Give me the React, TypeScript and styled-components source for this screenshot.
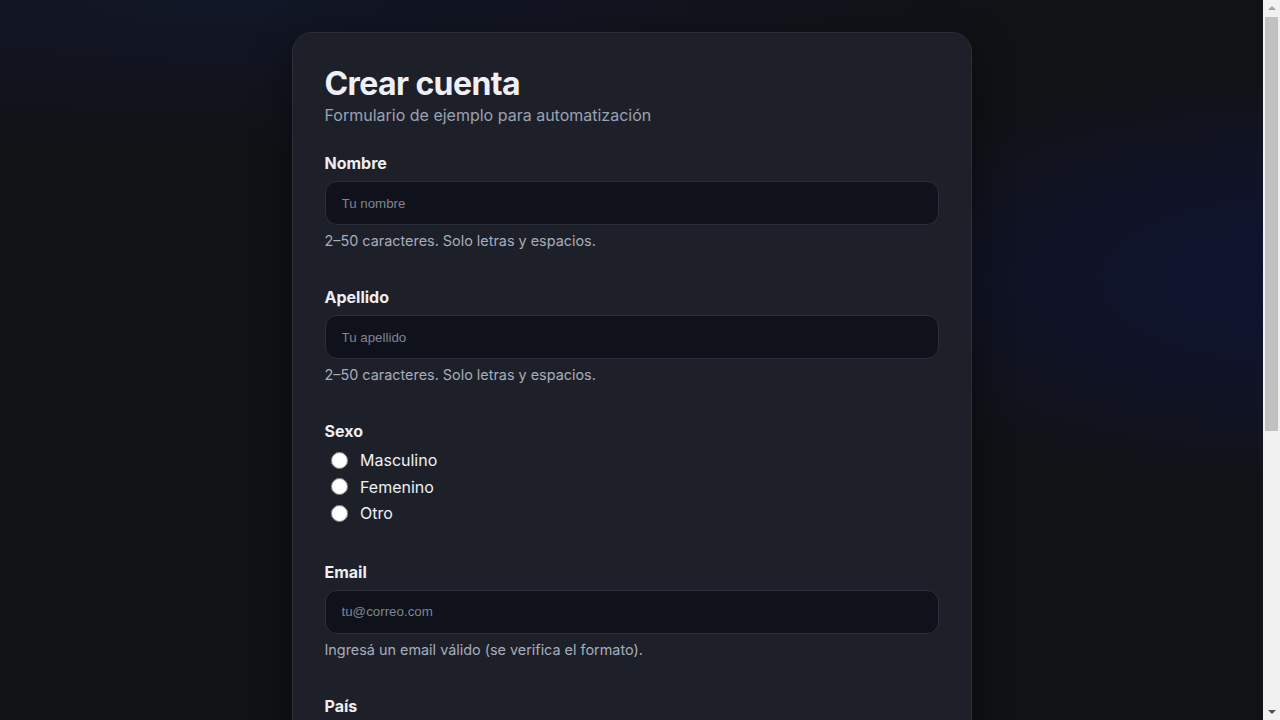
import React from "react";
import styled, { createGlobalStyle } from "styled-components";

const GlobalStyle = createGlobalStyle`
  html, body {
    margin: 0;
    padding: 0;
    height: 100%;
    overflow: hidden;
  }
  body {
    font-family: Inter, "Liberation Sans", Arial, sans-serif;
    color: #e8ebf1;
    background: #111216;
  }
`;

const Shell = styled.div`
  display: flex;
  height: 100vh;
`;

const ScrollArea = styled.div`
  flex: 1;
  min-width: 0;
  overflow-y: auto;
  background:
    radial-gradient(500px 210px at 1300px 280px, rgba(14, 22, 70, 0.55) 0%, rgba(14, 22, 70, 0.35) 50%, rgba(14, 22, 70, 0) 100%),
    radial-gradient(800px 150px at 18% 0px, rgba(18, 28, 60, 0.45), rgba(18, 28, 60, 0) 100%),
    #111216;
  background-attachment: local, local, local;
`;

const ScrollTrack = styled.div`
  width: 17px;
  flex: none;
  display: flex;
  flex-direction: column;
  background: #f1f1f1;
`;

const ScrollButton = styled.div<{ $down?: boolean }>`
  height: 17px;
  flex: none;
  display: flex;
  align-items: center;
  justify-content: center;
  &::before {
    content: "";
    width: 0;
    height: 0;
    border-left: 4px solid transparent;
    border-right: 4px solid transparent;
    ${(p) =>
      p.$down
        ? "border-top: 4px solid #505050; margin-top: 1px;"
        : "border-bottom: 4px solid #a3a3a3; margin-top: -1px;"}
  }
`;

const ScrollThumb = styled.div`
  height: 414px;
  margin: 0 2px;
  background: #c1c1c1;
  flex: none;
`;

const ScrollSpacer = styled.div`
  flex: 1;
`;

const Page = styled.main`
  display: flex;
  justify-content: center;
  padding: 32px 16px;
`;

const Card = styled.form`
  width: 100%;
  max-width: 680px;
  box-sizing: border-box;
  padding: 32px 32px 36px;
  background: #1e2029;
  border: 1px solid #2b2e39;
  border-radius: 20px;
  box-shadow: 0 12px 40px rgba(0, 0, 0, 0.45);
  display: flex;
  flex-direction: column;
`;

const Title = styled.h1`
  margin: 0;
  font-size: 32px;
  line-height: 38px;
  font-weight: 700;
  color: #eef0f5;
  letter-spacing: -0.6px;
`;

const Subtitle = styled.p`
  margin: 2px 0 28px;
  font-size: 16px;
  line-height: 20px;
  color: #9aa3b3;
`;

const Field = styled.div<{ $gap?: number }>`
  display: flex;
  flex-direction: column;
  margin-bottom: ${(p) => (p.$gap ?? 37)}px;
`;

const Label = styled.label`
  font-size: 16px;
  line-height: 20px;
  font-weight: 700;
  color: #eceef3;
  margin-bottom: 8px;
`;

const Input = styled.input`
  box-sizing: border-box;
  width: 100%;
  height: 44px;
  padding: 0 16px;
  background: #0f121a;
  border: 1px solid #2b2f3b;
  border-radius: 12px;
  color: #e8ebf1;
  font-family: "Liberation Sans", Arial, sans-serif;
  font-size: 13.333px;
  outline: none;
  &::placeholder {
    color: #7e8494;
  }
`;

const Select = styled.select`
  box-sizing: border-box;
  width: 100%;
  height: 44px;
  padding: 0 12px;
  background: #0f121a;
  border: 1px solid #2b2f3b;
  border-radius: 12px;
  color: #e8ebf1;
  font-family: "Liberation Sans", Arial, sans-serif;
  font-size: 13.333px;
`;

const Hint = styled.small`
  display: block;
  margin-top: 7px;
  font-size: 14.4px;
  line-height: 18px;
  color: #a6adbb;
`;

const RadioGroup = styled.div`
  display: flex;
  flex-direction: column;
  margin-top: -2px;
`;

const RadioRow = styled.label`
  display: flex;
  align-items: center;
  gap: 12px;
  height: 26.5px;
  font-size: 16px;
  color: #eef0f5;
`;

const Radio = styled.input`
  width: 17px;
  height: 17px;
  margin: 0 0 0 6.5px;
`;

const CheckRow = styled.label`
  display: flex;
  align-items: center;
  gap: 10px;
  font-size: 15px;
  color: #c9ced8;
  margin-bottom: 28px;
`;

const SubmitButton = styled.button`
  height: 46px;
  border: 0;
  border-radius: 12px;
  background: #3b6cf6;
  color: #ffffff;
  font-family: Inter, sans-serif;
  font-size: 16px;
  font-weight: 700;
`;

export default function App() {
  return (
    <>
      <GlobalStyle />
      <Shell>
        <ScrollArea>
          <Page>
            <Card noValidate onSubmit={(e) => e.preventDefault()}>
              <Title>Crear cuenta</Title>
              <Subtitle>Formulario de ejemplo para automatización</Subtitle>

              <Field>
                <Label htmlFor="nombre">Nombre</Label>
                <Input id="nombre" placeholder="Tu nombre" />
                <Hint>2–50 caracteres. Solo letras y espacios.</Hint>
              </Field>

              <Field>
                <Label htmlFor="apellido">Apellido</Label>
                <Input id="apellido" placeholder="Tu apellido" />
                <Hint>2–50 caracteres. Solo letras y espacios.</Hint>
              </Field>

              <Field $gap={35}>
                <Label as="span">Sexo</Label>
                <RadioGroup>
                  <RadioRow>
                    <Radio type="radio" name="sexo" value="M" />
                    Masculino
                  </RadioRow>
                  <RadioRow>
                    <Radio type="radio" name="sexo" value="F" />
                    Femenino
                  </RadioRow>
                  <RadioRow>
                    <Radio type="radio" name="sexo" value="O" />
                    Otro
                  </RadioRow>
                </RadioGroup>
              </Field>

              <Field>
                <Label htmlFor="email">Email</Label>
                <Input id="email" type="email" placeholder="tu@correo.com" />
                <Hint>Ingresá un email válido (se verifica el formato).</Hint>
              </Field>

              <Field>
                <Label htmlFor="pais">País</Label>
                <Select id="pais" defaultValue="">
                  <option value="">Seleccioná un país</option>
                  <option value="ar">Argentina</option>
                  <option value="cl">Chile</option>
                  <option value="uy">Uruguay</option>
                </Select>
                <Hint>Elegí una opción de la lista.</Hint>
              </Field>

              <Field>
                <Label htmlFor="pass">Contraseña</Label>
                <Input id="pass" type="password" placeholder="Mínimo 8 caracteres" />
                <Hint>Al menos 8 caracteres, una letra y un número.</Hint>
              </Field>

              <CheckRow>
                <input type="checkbox" />
                Acepto los términos y condiciones
              </CheckRow>

              <SubmitButton type="submit">Registrarme</SubmitButton>
            </Card>
          </Page>
        </ScrollArea>
        <ScrollTrack aria-hidden="true">
          <ScrollButton />
          <ScrollThumb />
          <ScrollSpacer />
          <ScrollButton $down />
        </ScrollTrack>
      </Shell>
    </>
  );
}
